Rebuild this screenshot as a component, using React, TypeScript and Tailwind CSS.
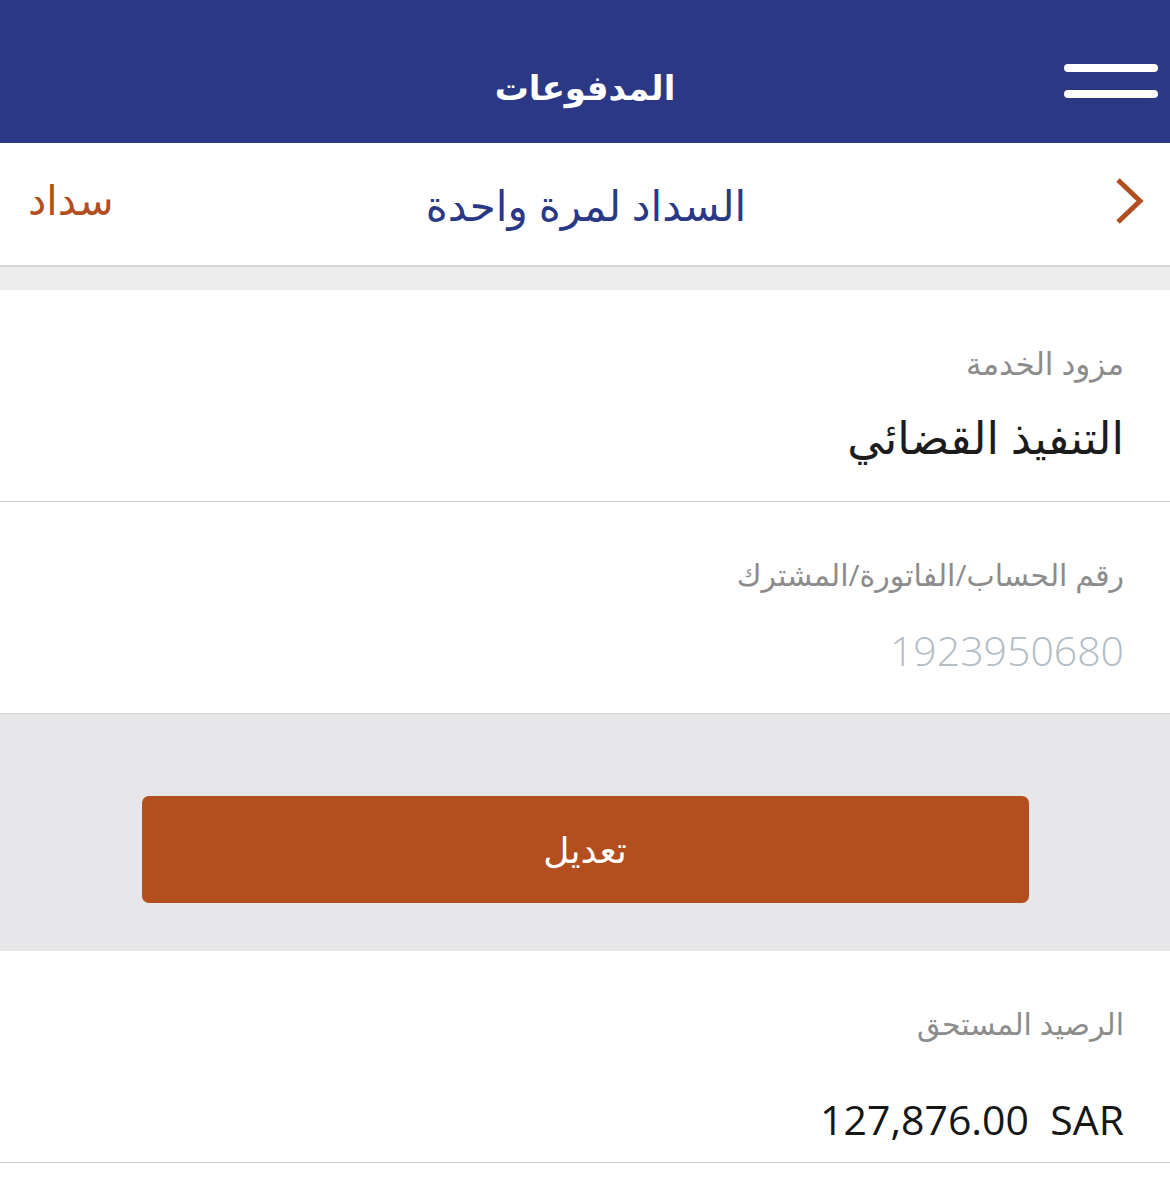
import React from 'react';

function Field({
  label,
  value,
  labelClass,
  valueClass,
}: {
  label: string;
  value: React.ReactNode;
  labelClass: string;
  valueClass: string;
}) {
  return (
    <div className="flex h-[212px] flex-col items-start border-b border-[#cfcfcf] bg-white pr-[46px] pt-[58px]">
      <div className={labelClass}>{label}</div>
      <div className={valueClass}>{value}</div>
    </div>
  );
}

export default function App() {
  return (
    <div dir="rtl" className="w-[1170px] bg-white" style={{ fontFamily: '"Open Sans", "DejaVu Sans", sans-serif' }}>
      {/* شريط العنوان */}
      <div className="relative flex h-[143px] items-center justify-center bg-[#2a3885]">
        <button type="button" className="absolute right-[12px] top-[64px] flex w-[94px] flex-col gap-[18px]">
          <span className="h-[8px] w-full rounded-full bg-white" />
          <span className="h-[8px] w-full rounded-full bg-white" />
        </button>
        <div className="mt-[32px] text-[34px] font-bold text-white">المدفوعات</div>
      </div>

      <div className="grid h-[124px] grid-cols-[1fr_auto_1fr] items-center border-b-2 border-[#d4d4d4] bg-white pl-[28px] pr-[26px]">
        <svg width="30" height="48" viewBox="0 0 30 48" className="mt-[-6px]">
          <path d="M4 3 L26 24 L4 45" fill="none" stroke="#b34e20" strokeWidth="5" />
        </svg>
        <div className="text-[42px] text-[#2a3885]">السداد لمرة واحدة</div>
        <div className="mt-[-8px] justify-self-end text-[41px] text-[#b34e20]">سداد</div>
      </div>
      <div className="h-[23px] bg-[#ececec]" />

      <Field
        label="مزود الخدمة"
        labelClass="text-[31px] leading-none text-[#8c8c8c]"
        value="التنفيذ القضائي"
        valueClass="mt-[24px] text-[45px] text-[#1c1c1c]"
      />
      <Field
        label="رقم الحساب/الفاتورة/المشترك"
        labelClass="text-[30px] leading-none text-[#8c8c8c]"
        value="1923950680"
        valueClass="mt-[30px] text-[41px] font-light text-[#b4bcc4]"
      />

      <div className="flex h-[237px] items-start justify-center bg-[#e7e7e9] pt-[82px]">
        <button
          type="button"
          className="flex h-[107px] w-[887px] items-center justify-center rounded-[7px] bg-[#b34e1f] text-[36px] text-white"
        >
          تعديل
        </button>
      </div>

      <Field
        label="الرصيد المستحق"
        labelClass="text-[30px] leading-none text-[#8c8c8c]"
        value={<span dir="ltr">127,876.00&nbsp;&nbsp;SAR</span>}
        valueClass="mt-[50px] text-[41px] text-[#161616]"
      />
      <div className="h-[38px] bg-white" />
    </div>
  );
}
